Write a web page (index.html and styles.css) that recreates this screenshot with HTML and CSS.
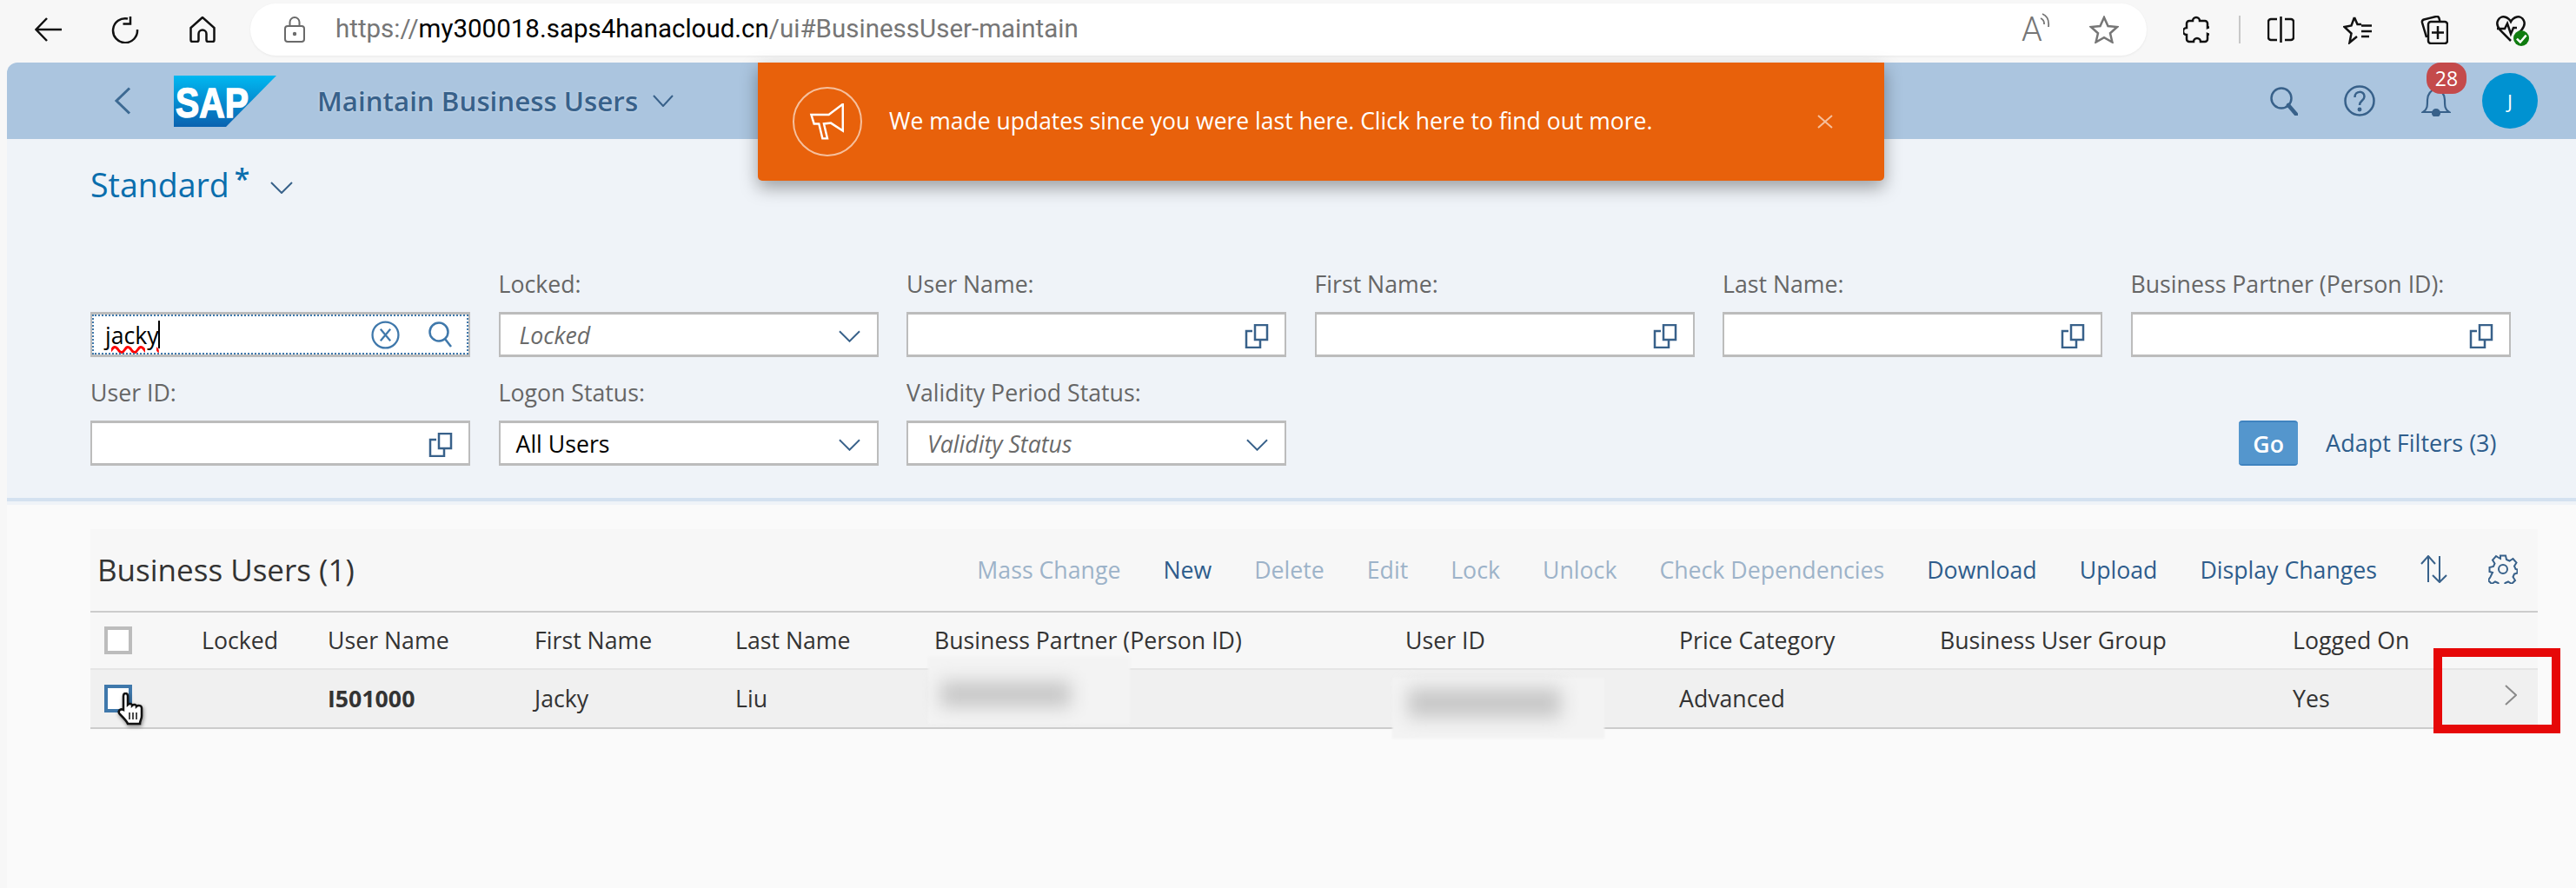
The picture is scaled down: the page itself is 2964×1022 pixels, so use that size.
FILE: index.html
```html
<!DOCTYPE html>
<html lang="en">
<head>
<meta charset="utf-8">
<title>Maintain Business Users</title>
<link rel="stylesheet" href="styles.css">
</head>
<body>
<div class="browser">
  <svg class="ic back-ic" viewBox="0 0 32 28"><path d="M31 14H2M14 1 1.500 14 14 27"/></svg>
  <svg class="ic refresh-ic" viewBox="0 0 33 32"><path d="M20 3.500A14 14 0 1 0 31 16M23 1v8.500h-8.500"/></svg>
  <svg class="ic home-ic" viewBox="0 0 30 30"><path d="M15 1 1.500 13v14a2 2 0 0 0 2 2h5a2 2 0 0 0 2-2v-7a4.500 4.500 0 0 1 9 0v7a2 2 0 0 0 2 2h5a2 2 0 0 0 2-2V13Z"/></svg>
  <div class="addr">
    <svg class="lock-ic" viewBox="0 0 24 30"><rect x="1" y="11" width="22" height="18" rx="3"/><path d="M6.500 11V6.500a5.500 5.500 0 0 1 11 0V11"/><circle cx="12" cy="20" r="1.200"/></svg>
    <span class="url"><span class="url-dim">https://</span>my300018.saps4hanacloud.cn<span class="url-dim">/ui#BusinessUser-maintain</span></span>
    <span class="read-a">A<svg class="read-waves" viewBox="0 0 12 20"><path d="M1 6a7 7 0 0 1 4 7M3 1c5 2 8 7 7 15"/></svg></span>
    <svg class="addr-star" viewBox="0 0 34 32"><path d="M17 2l4.500 10 10.500 1-8 7.200 2.400 10.300L17 25.200 7.600 30.500 10 20.200 2 13l10.500-1Z"/></svg>
  </div>
  <div class="tools">
    <svg class="ic tool-puzzle" viewBox="0 0 30 33"><path d="M11 6a4 4 0 1 1 8 0h6a3 3 0 0 1 3 3v5a4 4 0 1 1 0 7v6a3 3 0 0 1-3 3h-5a4 4 0 1 0-8 0H7a3 3 0 0 1-3-3v-5a4 4 0 1 1 0-8V9a3 3 0 0 1 3-3Z"/></svg>
    <span class="tool-sep"></span>
    <svg class="ic tool-split" viewBox="0 0 31 32"><path d="M15.500 1v30M11 4H4a3 3 0 0 0-3 3v18a3 3 0 0 0 3 3h7M20 4h7a3 3 0 0 1 3 3v18a3 3 0 0 1-3 3h-7"/></svg>
    <svg class="ic tool-fav" viewBox="0 0 34 33"><path d="M13 2l3.500 8H21M21 11.500h12M21 18h12M21 24h9M16 24l-8.500 7 2-10.500L1.500 13l8-1.500L13 2"/></svg>
    <svg class="ic tool-coll" viewBox="0 0 32 33"><path d="M7 25 2 8a3 3 0 0 1 2-3.500L18 1a3 3 0 0 1 3.500 2l1 4M12 7h16a3 3 0 0 1 3 3v19a3 3 0 0 1-3 3H12a3 3 0 0 1-3-3V10a3 3 0 0 1 3-3ZM20 12v15M13 19.500h14"/></svg>
    <span class="tool-heart">
      <svg class="ic heart-ic" viewBox="0 0 34 30"><path d="M17 29 5 17C-3 8 4 0 10 1.500c3 .7 5.500 2.500 7 5.500 1.500-3 4-4.800 7-5.500C30 0 37 8 29 17l-2 2M1 15h9l3-6 4 12 3-7h4"/></svg>
      <span class="heart-ok"><svg viewBox="0 0 16 16"><path d="M3.500 8.500 7 12l6-7"/></svg></span>
    </span>
    <span class="tool-dot"></span>
  </div>
</div>

<div class="app">
  <header class="shell">
    <svg class="shell-back" viewBox="0 0 20 32"><path d="M18 1.500 3 16l15 14.500"/></svg>
    <svg class="sap-logo" viewBox="0 0 118 59">
      <defs><linearGradient id="sapg" x1="0" y1="0" x2="0" y2="1"><stop offset="0" stop-color="#00b8f1"/><stop offset="1" stop-color="#0a62b0"/></linearGradient></defs>
      <polygon points="0,0 118,0 60,59 0,59" fill="url(#sapg)"/>
      <text x="2" y="48" class="sap-word" textLength="84" lengthAdjust="spacingAndGlyphs">SAP</text>
    </svg>
    <span class="shell-title">Maintain Business Users</span>
    <svg class="shell-caret" viewBox="0 0 24 14"><path d="M1 1l11 12L23 1"/></svg>
    <div class="shell-right">
      <svg class="shell-search" viewBox="0 0 32 33"><circle cx="13" cy="13" r="11.500"/><path d="M21 21l9 10.500" class="thick"/></svg>
      <svg class="shell-help" viewBox="0 0 36 36"><circle cx="18" cy="18" r="16.500"/><path d="M12.500 14c0-8 11-8 11-1 0 5-5.500 4.500-5.500 10"/><circle cx="18" cy="28" r="1.200" class="fill"/></svg>
      <span class="shell-bell">
        <svg class="bell-ic" viewBox="0 0 34 32"><path d="M2 27c5-3 5-7 5-14 0-6 4-12 10-12s10 6 10 12c0 7 0 11 5 14Z"/><circle cx="17" cy="28" r="4" class="fill"/></svg>
        <span class="bell-badge">28</span>
      </span>
      <span class="avatar">J</span>
    </div>
  </header>

  <section class="filters">
    <div class="variant">
      <span class="variant-name">Standard</span><span class="variant-star">*</span>
      <svg class="variant-caret" viewBox="0 0 26 14"><path d="M1 1l12 12L25 1"/></svg>
    </div>
    <div class="filter-grid">
      <div class="field">
        <span class="flabel">&nbsp;</span>
        <div class="box box-search">
          <span class="focus-ring"></span>
          <span class="val val-search"><span class="typo">jacky</span><span class="caret"></span></span>
          <svg class="clear-ic" viewBox="0 0 32 32"><circle cx="16" cy="16" r="14.500"/><path d="M10.500 9.500l11 13M21.500 9.500l-11 13"/></svg>
          <svg class="mag-ic" viewBox="0 0 28 30"><circle cx="12" cy="12" r="10.500"/><path d="M19 20l7 9"/></svg>
        </div>
      </div>
      <div class="field"><span class="flabel">Locked:</span><div class="box"><span class="val ph">Locked</span><svg class="dd-ic" viewBox="0 0 26 14"><path d="M1 1l12 12L25 1"/></svg></div></div>
      <div class="field"><span class="flabel">User Name:</span><div class="box"><svg class="vh-ic" viewBox="0 0 28 28"><path d="M9 8H2v19h16v-8"/><rect x="12" y="1" width="14" height="17"/></svg></div></div>
      <div class="field"><span class="flabel">First Name:</span><div class="box"><svg class="vh-ic" viewBox="0 0 28 28"><path d="M9 8H2v19h16v-8"/><rect x="12" y="1" width="14" height="17"/></svg></div></div>
      <div class="field"><span class="flabel">Last Name:</span><div class="box"><svg class="vh-ic" viewBox="0 0 28 28"><path d="M9 8H2v19h16v-8"/><rect x="12" y="1" width="14" height="17"/></svg></div></div>
      <div class="field"><span class="flabel">Business Partner (Person ID):</span><div class="box"><svg class="vh-ic" viewBox="0 0 28 28"><path d="M9 8H2v19h16v-8"/><rect x="12" y="1" width="14" height="17"/></svg></div></div>

      <div class="field"><span class="flabel">User ID:</span><div class="box"><svg class="vh-ic" viewBox="0 0 28 28"><path d="M9 8H2v19h16v-8"/><rect x="12" y="1" width="14" height="17"/></svg></div></div>
      <div class="field"><span class="flabel">Logon Status:</span><div class="box box-plain"><span class="val">All Users</span><svg class="dd-ic" viewBox="0 0 26 14"><path d="M1 1l12 12L25 1"/></svg></div></div>
      <div class="field"><span class="flabel">Validity Period Status:</span><div class="box"><span class="val ph">Validity Status</span><svg class="dd-ic" viewBox="0 0 26 14"><path d="M1 1l12 12L25 1"/></svg></div></div>
      <div class="actions"><span class="go">Go</span><span class="adapt">Adapt Filters (3)</span></div>
    </div>
  </section>

  <section class="content">
    <div class="panel">
      <div class="toolbar">
        <h2 class="tbl-title">Business Users (1)</h2>
        <div class="tbl-actions">
          <span class="act off">Mass Change</span>
          <span class="act">New</span>
          <span class="act off">Delete</span>
          <span class="act off">Edit</span>
          <span class="act off">Lock</span>
          <span class="act off">Unlock</span>
          <span class="act off">Check Dependencies</span>
          <span class="act">Download</span>
          <span class="act">Upload</span>
          <span class="act">Display Changes</span>
          <svg class="sort-ic" viewBox="0 0 32 32"><path d="M10 31V2M2 10l8-9 8 9M23 1v30M15 23l8 8 8-8"/></svg>
          <svg class="gear-ic" viewBox="0 0 34 34"><circle cx="17" cy="17" r="5"/><path d="M14 1.500h6l1 4.500 3.500 1.500 4-2.500 4 4.500-2.500 4 1.500 3.500 2 .5v4l-3.500 1-1.500 3.500 2.500 4-4 4-4-2.500-3.500 1.500-1 4h-6l-1-4-3.500-1.500-4 2.500-4-4 2.500-4L5 21l-3.500-1v-5L6 14l1.500-3.500-2.500-4 4-4.500 4 2.500L14 5Z"/></svg>
        </div>
      </div>
      <div class="tbl tbl-head">
        <span class="cell-check"><span class="cbx"></span></span>
        <span class="tcell">Locked</span><span class="tcell">User Name</span><span class="tcell">First Name</span><span class="tcell">Last Name</span><span class="tcell">Business Partner (Person ID)</span><span class="tcell">User ID</span><span class="tcell">Price Category</span><span class="tcell">Business User Group</span><span class="tcell">Logged On</span>
      </div>
      <div class="tbl tbl-row">
        <span class="cell-check"><span class="cbx cbx-on"></span></span>
        <span></span><span class="tcell strong">I501000</span><span class="tcell">Jacky</span><span class="tcell">Liu</span>
        <span></span><span></span><span class="tcell">Advanced</span><span></span><span class="tcell">Yes</span>
      </div>
    </div>
  </section>
</div>

<div class="banner">
  <span class="banner-circle"><svg class="mega-ic" viewBox="0 0 50 52"><path d="M2 16h25L47 1v38L30 28l-10 1 5 21h-7l-5-21H6Z"/></svg></span>
  <span class="banner-text">We made updates since you were last here. Click here to find out more.</span>
  <svg class="banner-x" viewBox="0 0 18 16"><path d="M1 1l16 14M17 1 1 15"/></svg>
</div>
<div class="redact redact-a"><span class="smudge"></span></div>
<div class="redact redact-b"><span class="smudge"></span></div>
<svg class="hand" viewBox="0 0 32 38"><path d="M7 19V4c0-4 5-4 5 0v10c2-2 5-1 5 1 2-2 5-1 5 1 2-2 6-1 6 2v9c0 4-2 5-2 9H12c-1-3-4-6-9-11-3-3 0-7 4-5Z"/><path class="hand-lines" d="M14 23v8M18 23v8M22 23v8"/></svg>
<div class="callout"><svg class="nav-ic" viewBox="0 0 14 24"><path d="M1 1l12 11L1 23"/></svg></div>
</body>
</html>
```

FILE: styles.css
```css
* { box-sizing: border-box; }
html, body { margin: 0; padding: 0; }
body {
  width: 2964px; height: 1022px; overflow: hidden; position: relative;
  background: #f7f7f7; font-family: "Open Sans", sans-serif; color: #333;
}
.browser {
  height: 72px; background: #f7f7f7; display: flex; align-items: center; padding: 0 0 4px 40px;
}
.ic { fill: none; stroke: #111; stroke-width: 2.5; flex: none; }
.back-ic { width: 32px; height: 28px; margin-right: 55px; }
.refresh-ic { width: 33px; height: 32px; margin-right: 58px; }
.home-ic { width: 30px; height: 30px; margin-right: 40px; }
.addr {
  width: 2182px; height: 60px; background: #fff; border-radius: 30px; display: flex; align-items: center;
  padding-left: 39px; box-shadow: 0 1px 3px rgba(0,0,0,.06); flex: none; position: relative;
}
.lock-ic { width: 24px; height: 30px; fill: none; stroke: #6a6a6a; stroke-width: 2; margin-right: 35px; }
.url { font-family: Roboto, sans-serif; font-size: 29.5px; color: #000; white-space: nowrap; flex: 1; margin-top: -2px; }
.url-dim { color: #767676; }
.read-a { font-family: Roboto, sans-serif; font-size: 38px; color: #767676; font-weight: 300; width: 78px; display: flex; align-items: flex-start; line-height: 38px; }
.read-waves { width: 12px; height: 20px; fill: none; stroke: #767676; stroke-width: 1.8; margin-left: -3px; }
.addr-star { width: 34px; height: 32px; fill: none; stroke: #767676; stroke-width: 2.5; margin-right: 32px; }
.tools { display: flex; align-items: center; margin-left: 42px; }
.tool-puzzle { width: 30px; height: 33px; margin-right: 34px; }
.tool-sep { width: 2px; height: 32px; background: #c8c8c8; margin-right: 31px; }
.tool-split { width: 31px; height: 32px; margin-right: 56px; }
.tool-fav { width: 34px; height: 33px; margin-right: 55px; }
.tool-coll { width: 32px; height: 33px; margin-right: 55px; }
.tool-heart { position: relative; width: 37px; height: 32px; margin-right: 55px; }
.heart-ic { width: 34px; height: 30px; display: block; }
.heart-ok { position: absolute; right: -1px; bottom: -3px; width: 18px; height: 18px; border-radius: 50%; background: #107c10; display: flex; }
.heart-ok svg { width: 18px; height: 18px; fill: none; stroke: #fff; stroke-width: 2.2; }
.tool-dot { width: 3px; height: 3px; border-radius: 50%; background: #111; }

.app {
  margin-left: 8px; height: 950px; background: #fafafa; border-top-left-radius: 12px; overflow: hidden;
}
.shell {
  height: 88px; background: #abc5df; display: flex; align-items: center; padding-left: 123px; position: relative;
}
.shell-back { width: 20px; height: 32px; fill: none; stroke: #3d6a93; stroke-width: 3; margin-right: 49px; flex: none; }
.sap-logo { width: 118px; height: 59px; margin-right: 47px; flex: none; }
.sap-word { font-family: "Liberation Sans", sans-serif; font-weight: 700; font-size: 49px; fill: #fff; stroke: #fff; stroke-width: 1.5; }
.shell-title {
  font-family: "Open Sans", sans-serif; font-weight: 600; font-size: 31.3px; color: #38618a; white-space: nowrap;
  text-shadow: 0 0 3px rgba(255,255,255,.5); margin-right: 17px;
}
.shell-caret { width: 24px; height: 14px; fill: none; stroke: #38618a; stroke-width: 2; }
.shell-right { margin-left: auto; display: flex; align-items: center; padding-right: 44px; }
.shell-search { width: 32px; height: 33px; fill: none; stroke: #38618a; stroke-width: 2.5; margin-right: 53px; }
.thick { stroke-width: 4.5; stroke-linecap: round; }
.shell-help { width: 36px; height: 36px; fill: none; stroke: #38618a; stroke-width: 2.5; margin-right: 53px; }
.fill { fill: #38618a; }
.shell-bell { position: relative; width: 34px; height: 32px; margin-right: 36px; margin-top: 4px; }
.bell-ic { width: 34px; height: 32px; display: block; fill: none; stroke: #38618a; stroke-width: 2.2; }
.bell-badge {
  position: absolute; left: 6px; top: -30px; width: 46px; height: 36px; border-radius: 16px; background: #c44a4b;
  color: #fff; font-size: 23px; line-height: 36px; text-align: center;
}
.avatar {
  width: 64px; height: 64px; border-radius: 50%; background: #0092d1; color: #fff; font-size: 22px;
  display: flex; align-items: center; justify-content: center;
}

.filters { height: 417px; background: #eff3f8; border-bottom: 4px solid #d4e1f0; padding: 0 0 0 96px; }
.variant { height: 126px; display: flex; align-items: center; padding-bottom: 21px; }
.variant-name { font-size: 37.5px; color: #0a6ead; }
.variant-star { font-size: 32px; font-weight: 600; color: #0a6ead; align-self: flex-start; line-height: 40px; margin: 26px 0 0 6px; }
.variant-caret { width: 26px; height: 14px; fill: none; stroke: #38618a; stroke-width: 2; margin-left: 24px; margin-top: 6px; }
.filter-grid { display: grid; grid-template-columns: repeat(6, 437px); column-gap: 32.5px; }
.field { display: flex; flex-direction: column; }
.flabel { height: 52px; margin-top: 21px; font-size: 26.7px; line-height: 40px; color: #666; white-space: nowrap; }
.box { height: 52px; background: #fff; border: 2px solid #bcbcbc; border-top-width: 3px; border-bottom-width: 3px; display: flex; align-items: center; position: relative; padding: 0 18px 0 22px; }
.box-plain { padding-left: 18px; }
.box-search { padding-left: 15px; }
.focus-ring { position: absolute; inset: 0; border: 2px dotted #3f78ab; }
.val { font-size: 26.7px; color: #000; flex: 1; }
.ph { font-style: italic; color: #6a6a6a; }
.val-search { display: flex; align-items: center; }
.typo { text-decoration: underline wavy #f00 3px; text-underline-offset: 2px; }
.caret { width: 2px; height: 32px; background: #000; margin-left: -1px; }
.clear-ic { width: 33px; height: 33px; fill: none; stroke: #3f78ab; stroke-width: 2.2; margin-right: 33px; flex: none; }
.mag-ic { width: 28px; height: 30px; fill: none; stroke: #3f78ab; stroke-width: 2.5; flex: none; }
.dd-ic { width: 25px; height: 14px; fill: none; stroke: #38618a; stroke-width: 2; flex: none; margin: 4px 1px 0 auto; }
.vh-ic { width: 28px; height: 28px; fill: none; stroke: #38618a; stroke-width: 2.5; margin: 4px 0 0 auto; flex: none; }
.actions { grid-column: 4 / 7; display: flex; align-items: flex-end; justify-content: flex-end; gap: 32px; padding-right: 16px; }
.go { width: 68px; height: 52px; background: #5496cd; border-radius: 4px; border-top: 2px solid #3f83bf; border-bottom: 2px solid #3f83bf; color: #fff; font-size: 26.7px; font-weight: 600; display: flex; align-items: center; justify-content: center; }
.adapt { height: 52px; font-size: 27px; line-height: 52px; color: #2e5d8c; white-space: nowrap; }

.content { height: 373px; background: #fafafa; border-top: 4px solid #eff3f8; padding: 28px 44px 0 96px; }
.panel { background: #f7f7f7; }
.toolbar { height: 96px; display: flex; align-items: center; justify-content: space-between; padding: 0 0 2px 8px; border-bottom: 2px solid #ccc; }
.tbl-title { margin: 0; font-weight: 400; font-size: 35px; color: #333; }
.tbl-actions { display: flex; align-items: center; gap: 49px; padding-right: 23px; }
.act { font-size: 26.7px; color: #2e5d8c; white-space: nowrap; }
.off { color: #9db3c9; }
.sort-ic { width: 32px; height: 32px; fill: none; stroke: #38618a; stroke-width: 2; }
.gear-ic { width: 34px; height: 34px; fill: none; stroke: #38618a; stroke-width: 2; margin-left: -2px; }
.tbl { display: grid; grid-template-columns: 128px 145px 238px 231px 229px 542px 315px 300px 406px 282px; align-items: center; font-size: 26.7px; color: #333; }
.tcell { margin-top: -2px; }
.tbl-head { height: 66px; border-bottom: 2px solid #e6e6e6; }
.tbl-row { height: 68px; border-bottom: 2px solid #ccc; background: #f0f0f0; }
.cell-check { padding-left: 16px; display: flex; }
.cbx { width: 32px; height: 32px; background: #fff; border: 4px solid #bcbcbc; display: block; }
.cbx-on { border-color: #3f78ab; }
.strong { font-weight: 700; }

.banner {
  position: absolute; left: 872px; top: 72px; width: 1296px; height: 136px; background: #e8610b;
  border-radius: 0 0 5px 5px; box-shadow: 0 8px 20px rgba(0,0,0,.35); display: flex; align-items: center; padding-left: 40px;
}
.banner-circle { width: 80px; height: 80px; border-radius: 50%; border: 2px solid rgba(255,255,255,.6); display: flex; align-items: center; justify-content: center; margin-right: 31px; flex: none; }
.mega-ic { width: 44px; height: 42px; fill: none; stroke: #fff; stroke-width: 3; }
.banner-text { color: #fff; font-size: 26.5px; white-space: nowrap; margin-top: -2px; }
.banner-x { position: absolute; left: 1219px; top: 60px; width: 18px; height: 16px; fill: none; stroke: rgba(255,255,255,.6); stroke-width: 2; }
.redact { position: absolute; background: #f3f3f3; display: flex; filter: blur(1px); }
.redact-a { left: 1068px; top: 756px; width: 232px; height: 77px; }
.redact-b { left: 1602px; top: 780px; width: 244px; height: 70px; }
.smudge { background: #c8c8c8; filter: blur(10px); position: absolute; }
.redact-a .smudge { left: 14px; top: 28px; width: 150px; height: 30px; }
.redact-b .smudge { left: 18px; top: 12px; width: 176px; height: 34px; }
.hand { position: absolute; left: 135px; top: 797px; width: 32px; height: 38px; fill: #fff; stroke: #111; stroke-width: 2.5; filter: drop-shadow(1px 2px 2px rgba(0,0,0,.45)); }
.hand-lines { fill: none; stroke-width: 1.5; }
.callout {
  position: absolute; left: 2800px; top: 746px; width: 146px; height: 98px; border: 10px solid #e60808;
  display: flex; align-items: flex-start; justify-content: flex-end; padding: 32px 40px 0 0;
}
.nav-ic { width: 14px; height: 24px; fill: none; stroke: #8a8a8a; stroke-width: 2; }
```
